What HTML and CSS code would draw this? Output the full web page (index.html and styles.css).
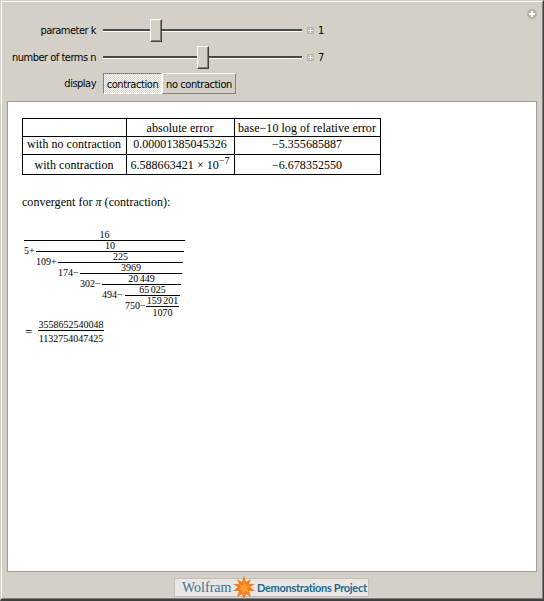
FILE: index.html
```html
<!DOCTYPE html>
<html lang="en">
<head>
<meta charset="utf-8">
<title>Continued fraction contraction</title>
<link rel="stylesheet" href="styles.css">
</head>
<body>
<div class="frame"><div class="panel">
  <div class="controls">
    <div class="row"><span class="label">parameter k</span><div class="slider"><i class="thumb k"></i></div><i class="plus"></i><span class="value">1</span></div>
    <div class="row"><span class="label">number of terms n</span><div class="slider"><i class="thumb n"></i></div><i class="plus"></i><span class="value">7</span></div>
    <div class="row display"><span class="label">display</span><div class="buttons"><button class="on">contraction</button><button>no contraction</button></div></div>
    <svg class="more" viewBox="0 0 10 10"><circle cx="5" cy="5" r="5" fill="#b1b0ad"/><path d="M5 2v6M2 5h6" stroke="#fff" stroke-width="2"/></svg>
  </div>
  <main class="output">
    <table>
      <tr class="r1"><td></td><td>absolute error</td><td>base−10 log of relative error</td></tr>
      <tr class="r2"><td>with no contraction</td><td>0.00001385045326</td><td>−5.355685887</td></tr>
      <tr class="r3"><td>with contraction</td><td>6.588663421 × 10<sup>−7</sup></td><td>−6.678352550</td></tr>
    </table>
    <p class="caption">convergent for <em>π</em> (contraction):</p>
    <div class="frac root"><div class="num">16</div><div class="den"><span class="term t1">5+</span>
      <div class="frac"><div class="num">10</div><div class="den"><span class="term t2">109+</span>
        <div class="frac"><div class="num">225</div><div class="den"><span class="term t3">174−</span>
          <div class="frac"><div class="num">3969</div><div class="den"><span class="term t4">302−</span>
            <div class="frac"><div class="num">20 449</div><div class="den"><span class="term t5">494−</span>
              <div class="frac"><div class="num">65 025</div><div class="den"><span class="term t6">750−</span>
                <div class="frac"><div class="num">159 201</div><div class="last">1070</div></div>
              </div></div>
            </div></div>
          </div></div>
        </div></div>
      </div></div>
    </div></div>
    <div class="result"><span class="equals">=</span><div class="ratio"><div>3558652540048</div><div>1132754047425</div></div></div>
  </main>
  <footer><div class="brand"><span class="wolfram">Wolfram</span>
    <svg class="star" viewBox="-12 -12 24 24"><path fill="#f47b20" d="M0-12L2-6 7-9 5-4 11-4 6-1 11 3 5 3 7 9 2 6 0 12-2 6-7 9-5 3-11 3-6-1-11-4-5-4-7-9-2-6Z"/><path fill="#ffa030" d="M0-6L2-2 6-3 3 0 5 4 1 3-1 6-2 2-6 2-3 0-5-4-1-2Z"/></svg>
    <span class="project">Demonstrations Project</span></div></footer>
</div></div>
</body>
</html>
```
FILE: styles.css
```css
* { box-sizing: border-box; }
body { margin: 0; background: #d4d0c8; font: 11px "DejaVu Sans Condensed", "DejaVu Sans", sans-serif; color: #000; }
.frame { height: 601px; width: 544px; border: 1px solid; border-color: #d4d0c8 #404040 #404040 #d4d0c8; border-bottom-width: 2px; }
.panel { height: 598px; background: #d4d0c8; border: 1px solid; border-color: #fff #808080 #808080 #fff; padding: 0 5px; display: flex; flex-direction: column; }
.controls { height: 99px; padding-top: 15px; position: relative; flex: none; }
.row { height: 27px; display: flex; align-items: center; }
.label { width: 89px; text-align: right; white-space: nowrap; letter-spacing: -.5px; }
.slider { width: 199px; height: 3px; margin-left: 7px; background: #fff; border-top: 2px solid #4b4945; position: relative; }
.thumb { position: absolute; top: -12px; width: 12px; height: 23px; background: #d4d0c8; border: 1px solid; border-color: #fff #404040 #404040 #fff; box-shadow: inset -1px -1px #858078; }
.k { left: 47px; }
.n { left: 94px; }
.plus { width: 7px; height: 7px; margin: 0 4px 0 5px; background: linear-gradient(#fff, #fff) center/5px 1px no-repeat, linear-gradient(#fff, #fff) center/1px 5px no-repeat, #b9b7b3; }
.display { height: 25px; align-items: center; }
.buttons { display: flex; height: 21px; margin-left: 7px; }
button { font: inherit; color: #000; letter-spacing: -.42px; height: 21px; width: 74px; padding: 1px 0 0; background: #d4d0c8; border: 1px solid; border-color: #fff #858078 #858078 #fff; white-space: nowrap; }
button.on { width: 59px; background: repeating-conic-gradient(#d4d0c8 0 25%, #fff 0 50%) 0 0/2px 2px; border-color: #858078 #fff #fff #858078; }
.more { position: absolute; left: 520px; top: 7px; width: 10px; height: 10px; }
.output { width: 530px; height: 471px; flex: none; background: #fff; border: 1px solid #9e9b94; padding: 16px 14px; font-family: "Liberation Serif", serif; }
table { border-collapse: collapse; table-layout: fixed; width: 359px; font-size: 12px; }
td { border: 1px solid #000; padding: 0 1px 0 0; text-align: center; white-space: nowrap; line-height: 14px; width: 104px; letter-spacing: .04px; }
td:nth-child(2) { width: 108px; }
td:nth-child(3) { width: 146px; }
.r1, .r2 { height: 18px; }
.r2 td { padding-bottom: 3px; }
.r3 { height: 20px; }
sup { font-size: 10px; line-height: 0; vertical-align: 5px; }
.caption { margin: 20px 0 0; font-size: 12px; line-height: 14px; letter-spacing: .03px; }
.root { width: 161px; margin: 21px 0 0 2px; }
.frac { flex: 1; }
.root, .num, .last { font-size: 10px; }
.num { height: 11px; line-height: 10px; text-align: center; border-bottom: 1px solid #000; white-space: nowrap; word-spacing: -1px; }
.den { display: flex; padding-right: 1px; }
.term { line-height: 12px; height: 12px; margin-top: 4px; white-space: nowrap; }
.t1 { width: 12px; }
.t2, .t3, .t4 { width: 22px; }
.t5 { width: 23px; }
.t6 { width: 21px; }
.last { text-align: center; height: 11px; line-height: 11px; }
.result { display: flex; align-items: center; margin: 1px 0 0 3px; }
.equals { width: 13px; font-size: 13px; line-height: 14px; }
.ratio { width: 66px; font-size: 10px; text-align: center; line-height: 11px; }
.ratio div + div { border-top: 1px solid #000; padding-top: 2px; }
footer { display: flex; padding: 6px 0 0 167px; }
.brand { width: 195px; height: 19px; background: #e9e7e3; border: 1px solid #c2bfb8; display: flex; align-items: center; padding-left: 7px; white-space: nowrap; }
.wolfram { font: 14px "Liberation Serif", serif; color: #3b7193; width: 50px; }
.star { width: 24px; height: 24px; flex: none; }
.project { font: 700 11px Lato, sans-serif; color: #1c6a91; margin-left: 1px; letter-spacing: -.3px; }
```
